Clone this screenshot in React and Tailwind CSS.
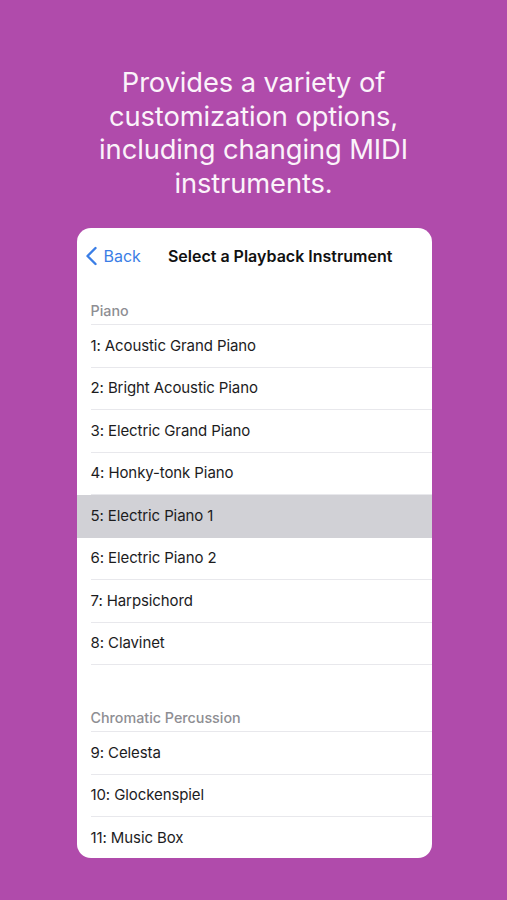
import React from "react";

const piano = [
  "1: Acoustic Grand Piano",
  "2: Bright Acoustic Piano",
  "3: Electric Grand Piano",
  "4: Honky-tonk Piano",
  "5: Electric Piano 1",
  "6: Electric Piano 2",
  "7: Harpsichord",
  "8: Clavinet",
];
const chromatic = ["9: Celesta", "10: Glockenspiel", "11: Music Box"];

function Row({ label, selected, last }) {
  return (
    <div className={selected ? "bg-[#d1d1d6]" : ""}>
      <div className="ml-[14px] h-[41.5px] flex items-center text-[15px] text-[#1c1c1e] tracking-[-0.1px]">
        {label}
      </div>
      {!last && !selected && <div className="ml-[14px] h-px bg-[#e8e8ec]" />}
      {selected && <div className="h-px" />}
    </div>
  );
}

function Header({ label, extra }) {
  return (
    <div className={extra ? "pt-[26px]" : ""}>
      <div className="ml-[14px] h-[40px] flex items-end pb-[3px] text-[14.3px] font-medium text-[#8e8e93]">
        {label}
      </div>
      <div className="ml-[14px] h-px bg-[#e8e8ec]" />
    </div>
  );
}

export default function App() {
  return (
    <div
      className="w-[507px] h-[900px] bg-[#b04bab] flex flex-col items-center overflow-hidden"
      style={{ fontFamily: "Inter, 'Noto Sans', sans-serif" }}
    >
      <div className="pt-[66px] text-center text-[27.3px] leading-[33.5px] text-[#fbf3fa] tracking-[-0.1px]">
        Provides a variety of
        <br />
        customization options,
        <br />
        including changing MIDI
        <br />
        instruments.
      </div>
      <div className="mt-[28px] ml-[1px] w-[355px] h-[630px] shrink-0 bg-white rounded-[14px] overflow-hidden">
        <div className="h-[56px] flex items-center pl-[7px]">
          <svg width="13" height="20" viewBox="0 0 13 20" className="ml-[1px]">
            <path d="M10.5 2 L2.5 10 L10.5 18" fill="none" stroke="#3a7ee6" strokeWidth="2.4" strokeLinecap="round" strokeLinejoin="round" />
          </svg>
          <span className="ml-[6px] text-[16px] text-[#3a7ee6]">Back</span>
          <span className="ml-[27px] text-[16px] font-semibold text-[#111]">Select a Playback Instrument</span>
        </div>
        <Header label="Piano" />
        {piano.map((p, i) => (
          <Row key={p} label={p} selected={i === 4} />
        ))}
        <Header label="Chromatic Percussion" extra />
        {chromatic.map((p, i) => (
          <Row key={p} label={p} last={i === chromatic.length - 1} />
        ))}
      </div>
    </div>
  );
}
